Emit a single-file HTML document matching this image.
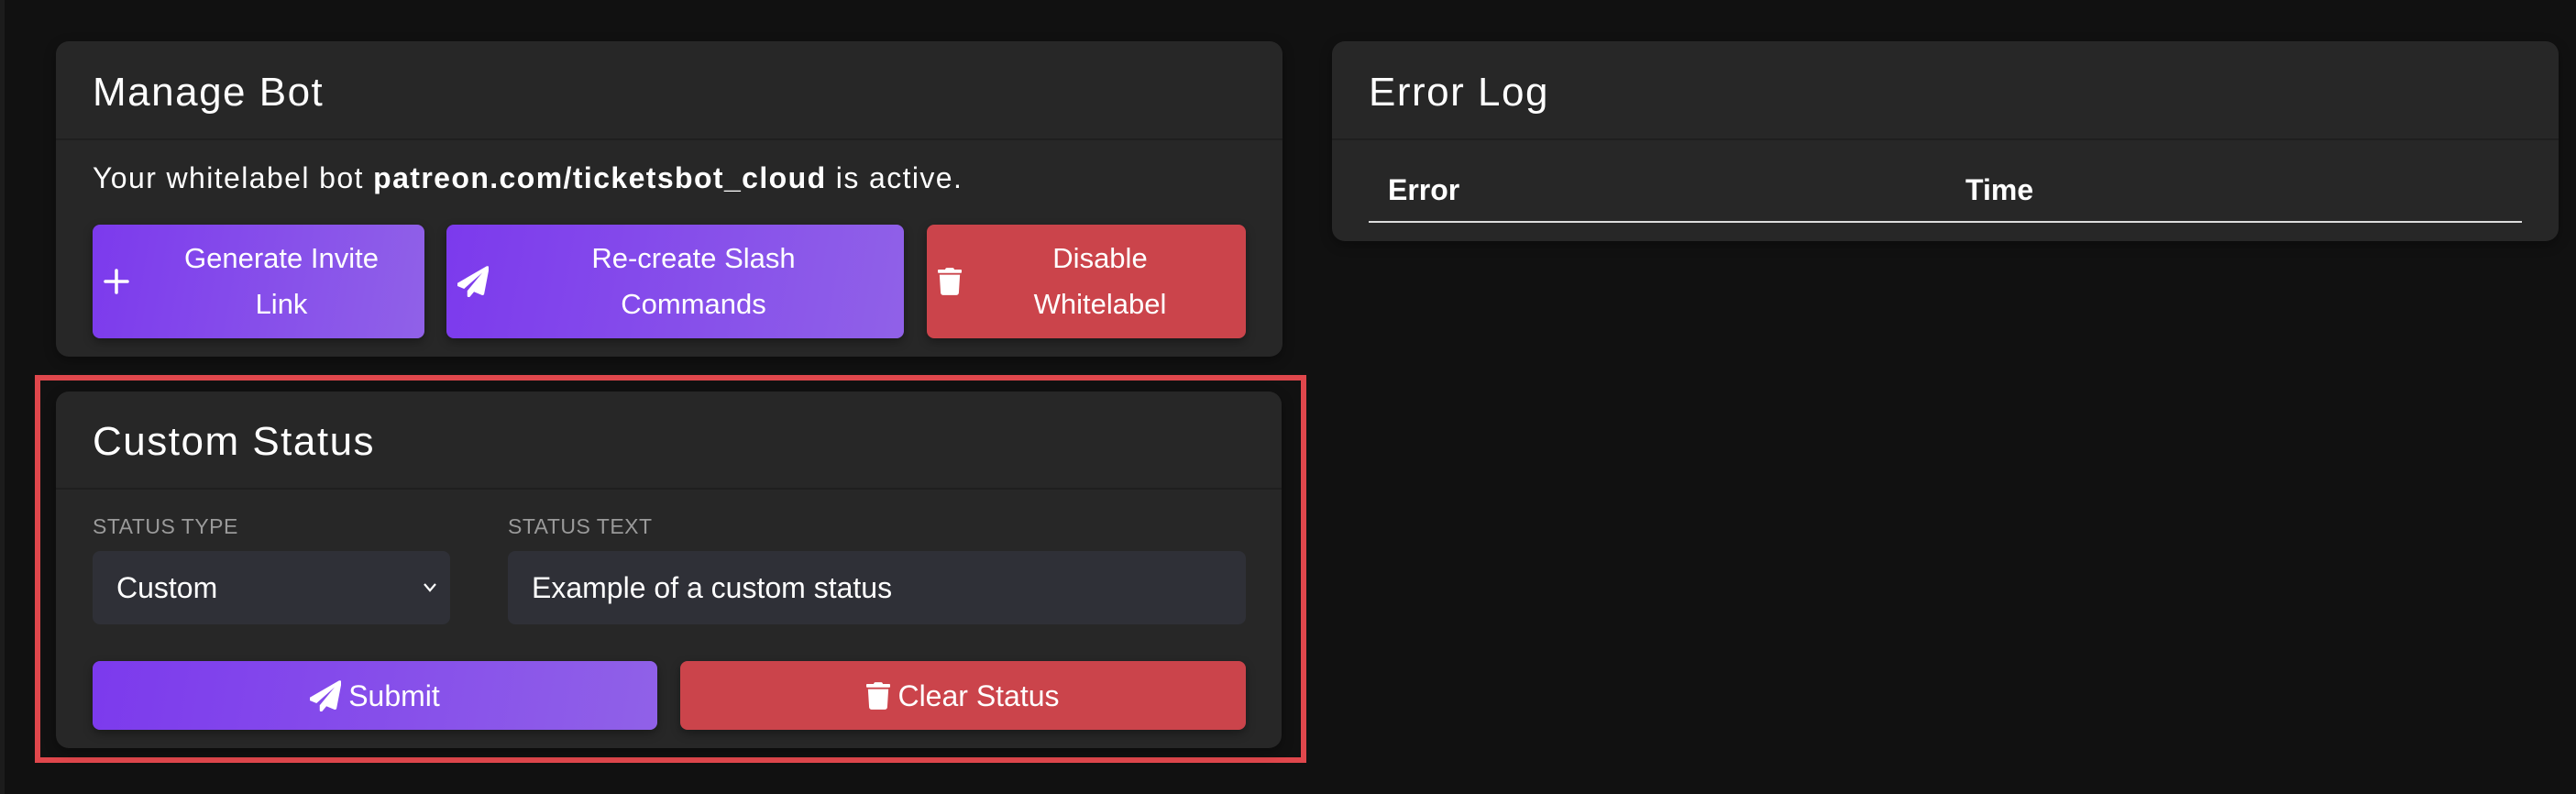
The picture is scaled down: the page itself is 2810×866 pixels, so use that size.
<!DOCTYPE html>
<html><head><meta charset="utf-8"><style>
*{box-sizing:border-box;margin:0;padding:0}
body{width:2810px;height:866px;background:#111111;position:relative;overflow:hidden;font-family:"Liberation Sans",sans-serif;color:#fff}
.strip{position:absolute;left:0;top:0;width:5px;height:866px;background:#1c1c1c}
.card{position:absolute;background:#272727;border-radius:14px;box-shadow:0 4px 12px rgba(0,0,0,.35)}
.hdr{position:absolute;left:0;right:0;top:0;border-bottom:2px solid #1f1f1f}
.title{position:absolute;font-size:44px;letter-spacing:1.5px;white-space:nowrap;line-height:1}
.btn{position:absolute;border-radius:8px;display:flex;align-items:center;justify-content:center;color:#fff;font-size:31px;line-height:50px;text-align:center;box-shadow:0 4px 10px rgba(0,0,0,.35)}
.pur{background:linear-gradient(100deg,#7c3aed,#9061e8)}
.red{background:#cb444b}
.ic{position:absolute;left:14px;top:50%;transform:translateY(-50%)}
.lbl{position:absolute;font-size:23px;color:#9a9a9a;letter-spacing:.5px}
.fld{position:absolute;background:#2f3037;border-radius:8px;font-size:32px;display:flex;align-items:center}
</style></head><body>
<div class="strip"></div>

<div class="card" style="left:61px;top:45px;width:1338px;height:344px">
  <div class="hdr" style="height:108px"></div>
  <div class="title" style="left:40px;top:34px">Manage Bot</div>
  <div style="position:absolute;left:40px;top:131px;font-size:32px;letter-spacing:1.4px;white-space:nowrap;line-height:1.15">Your whitelabel bot <b>patreon.com/ticketsbot_cloud</b> is active.</div>
</div>
<div class="btn pur" style="left:101px;top:245px;width:362px;height:124px;padding-left:50px">
  <svg class="ic" width="28" height="28" viewBox="0 0 28 28" style="left:12px"><path d="M14 2v24M2 14h24" stroke="#fff" stroke-width="3.5" stroke-linecap="round"/></svg>
  <span>Generate Invite<br>Link</span></div>
<div class="btn pur" style="left:487px;top:245px;width:499px;height:124px;padding-left:40px">
  <svg class="ic" width="34" height="34" viewBox="0 0 512 512" style="left:12px"><path d="M498 6L16 284c-19 11-17 39 3 46l110 46 298-263-245 298v80c0 23 28 33 43 16l67-81 130 54c16 7 34-3 37-20L541 32c3-21-21-36-43-26z" fill="#fff" transform="translate(-20,0)"/></svg>
  <span>Re-create Slash<br>Commands</span></div>
<div class="btn red" style="left:1011px;top:245px;width:348px;height:124px;padding-left:30px">
  <svg class="ic" width="26" height="32" viewBox="0 0 448 512" style="left:12px"><path d="M432 32H312l-9-19A24 24 0 0 0 281 0H167a24 24 0 0 0-21 13l-9 19H16A16 16 0 0 0 0 48v32a16 16 0 0 0 16 16h416a16 16 0 0 0 16-16V48a16 16 0 0 0-16-16zM53 467a48 48 0 0 0 48 45h246a48 48 0 0 0 48-45l21-339H32z" fill="#fff"/></svg>
  <span>Disable<br>Whitelabel</span></div>

<div class="card" style="left:1453px;top:45px;width:1338px;height:218px">
  <div class="hdr" style="height:108px"></div>
  <div class="title" style="left:40px;top:34px">Error Log</div>
  <div style="position:absolute;left:61px;top:144px;font-size:32px;font-weight:bold">Error</div>
  <div style="position:absolute;left:691px;top:144px;font-size:32px;font-weight:bold">Time</div>
  <div style="position:absolute;left:40px;top:196px;width:1258px;height:2px;background:#ddd"></div>
</div>

<div style="position:absolute;left:38px;top:409px;width:1387px;height:423px;border:6px solid #e0474c"></div>
<div class="card" style="left:61px;top:427px;width:1337px;height:389px">
  <div class="hdr" style="height:107px"></div>
  <div class="title" style="left:40px;top:33px">Custom Status</div>
</div>
<div class="lbl" style="left:101px;top:561px">STATUS TYPE</div>
<div class="lbl" style="left:554px;top:561px">STATUS TEXT</div>
<div class="fld" style="left:101px;top:601px;width:390px;height:80px;padding-left:26px">Custom
  <svg style="position:absolute;right:14px;top:34px" width="16" height="12" viewBox="0 0 16 12"><path d="M2 2l6 7 6-7" stroke="#fff" stroke-width="2.2" fill="none"/></svg></div>
<div class="fld" style="left:554px;top:601px;width:805px;height:80px;padding-left:26px">Example of a custom status</div>
<div class="btn pur" style="left:101px;top:721px;width:616px;height:75px;font-size:32px">
  <svg width="34" height="34" viewBox="0 0 512 512" style="margin-right:8px"><path d="M498 6L16 284c-19 11-17 39 3 46l110 46 298-263-245 298v80c0 23 28 33 43 16l67-81 130 54c16 7 34-3 37-20L541 32c3-21-21-36-43-26z" fill="#fff" transform="translate(-20,0)"/></svg>Submit</div>
<div class="btn red" style="left:742px;top:721px;width:617px;height:75px;font-size:32px">
  <svg width="26" height="32" viewBox="0 0 448 512" style="margin-right:8px"><path d="M432 32H312l-9-19A24 24 0 0 0 281 0H167a24 24 0 0 0-21 13l-9 19H16A16 16 0 0 0 0 48v32a16 16 0 0 0 16 16h416a16 16 0 0 0 16-16V48a16 16 0 0 0-16-16zM53 467a48 48 0 0 0 48 45h246a48 48 0 0 0 48-45l21-339H32z" fill="#fff"/></svg>Clear Status</div>
</body></html>
